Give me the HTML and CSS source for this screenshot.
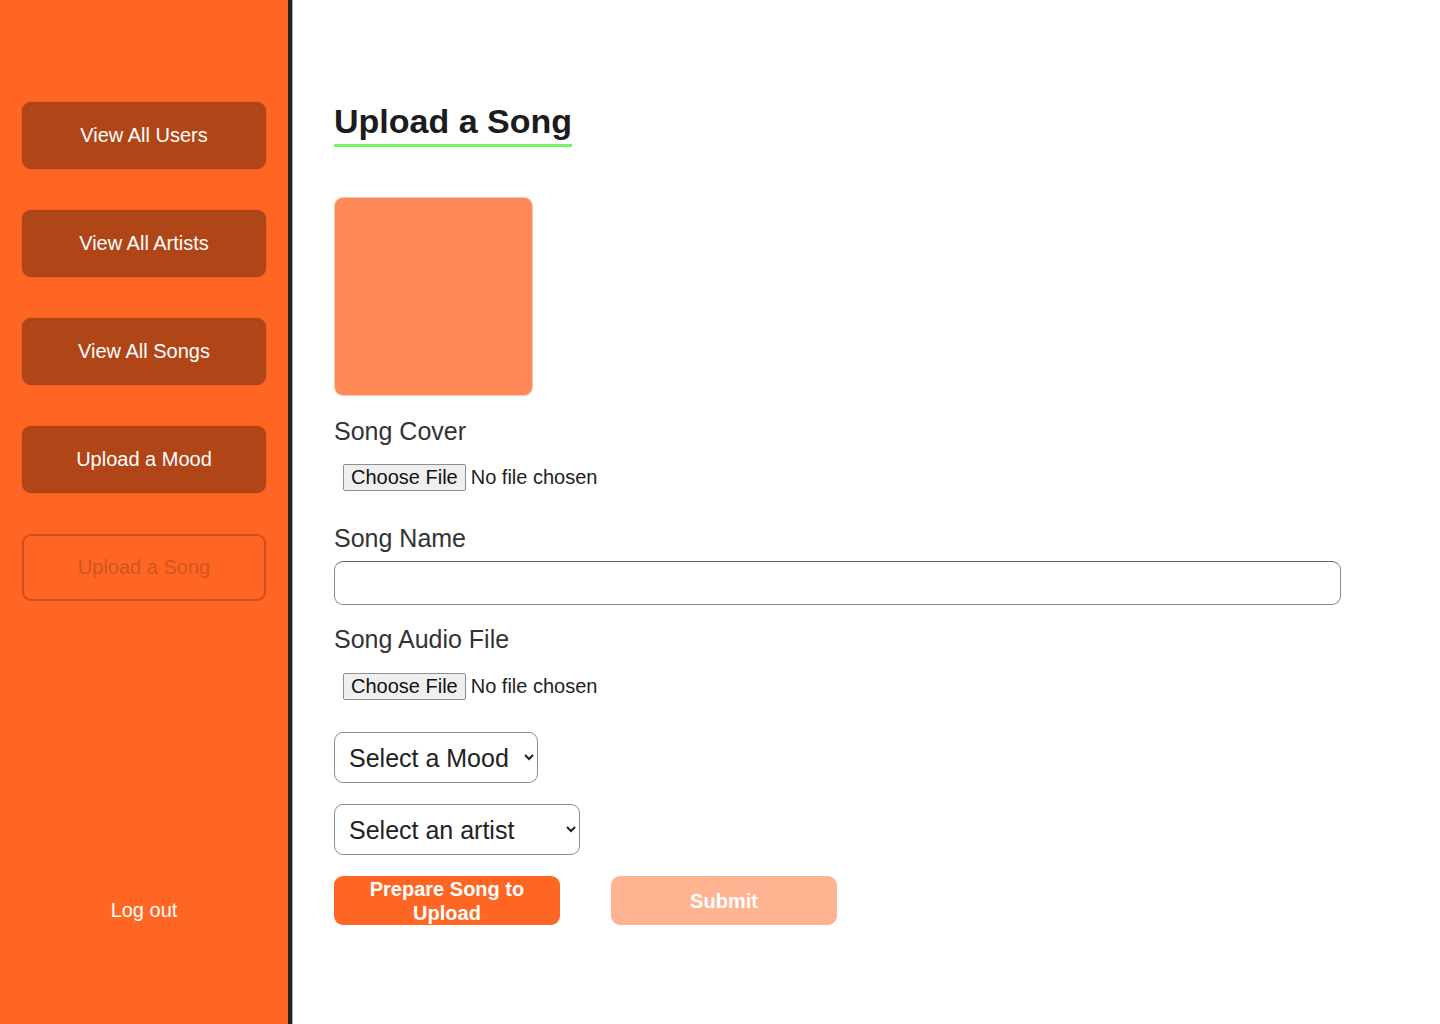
FILE: index.html
```html
<!DOCTYPE html>
<html lang="en">
<head>
<meta charset="utf-8">
<title>Upload a Song</title>
<link rel="stylesheet" href="styles.css">
</head>
<body>
<div class="layout">
  <aside class="sidebar">
    <nav class="nav">
      <button class="nav-btn">View All Users</button>
      <button class="nav-btn">View All Artists</button>
      <button class="nav-btn">View All Songs</button>
      <button class="nav-btn">Upload a Mood</button>
      <button class="nav-btn nav-btn-active">Upload a Song</button>
    </nav>
    <div class="logout">Log out</div>
  </aside>
  <main class="main">
    <h1 class="title">Upload a Song</h1>
    <form class="form">
      <div class="cover"></div>
      <label class="label label-cover">Song Cover</label>
      <input class="file file-cover" type="file">
      <label class="label label-name">Song Name</label>
      <input class="text" type="text">
      <label class="label label-audio">Song Audio File</label>
      <input class="file file-audio" type="file">
      <select class="select select-mood">
        <option>Select a Mood</option>
      </select>
      <select class="select select-artist">
        <option>Select an artist</option>
      </select>
      <div class="actions">
        <button type="button" class="btn btn-prepare">Prepare Song to<br>Upload</button>
        <button type="button" class="btn btn-submit">Submit</button>
      </div>
    </form>
  </main>
</div>
</body>
</html>
```
FILE: styles.css
```css
* { box-sizing: border-box; }
html, body { margin: 0; padding: 0; }
body {
  font-family: "Liberation Sans", Arial, sans-serif;
  background: #ffffff;
  color: #222;
}
.layout {
  display: flex;
  min-height: 1024px;
}
.sidebar {
  width: 292px;
  flex: 0 0 292px;
  height: 1024px;
  background: #ff6624;
  border-right: 4px solid #222222;
  box-shadow: 1px 0 0 #b8aaa4;
  display: flex;
  flex-direction: column;
  padding-top: 102px;
}
.nav {
  display: flex;
  flex-direction: column;
  gap: 41px;
  padding: 0 22px;
}
.nav-btn {
  height: 67px;
  width: 244px;
  border: 1px solid #ad4519;
  border-radius: 9px;
  background: #b04518;
  color: #ffffff;
  font-family: "Liberation Sans", Arial, sans-serif;
  font-size: 20px;
  box-shadow: 0 0 2px rgba(120, 40, 0, 0.35);
  cursor: pointer;
}
.nav-btn-active {
  background: transparent;
  border: 2px solid #c8521e;
  color: #cf5620;
  box-shadow: none;
}
.logout {
  margin-top: auto;
  margin-bottom: 102px;
  text-align: center;
  color: #ffffff;
  font-size: 20px;
  line-height: 24px;
}
.main {
  flex: 1;
  padding: 101px 0 0 42px;
}
.title {
  display: inline-block;
  margin: 0;
  font-size: 34px;
  line-height: 40px;
  font-weight: bold;
  color: #1c1c1c;
  padding-bottom: 3px;
  border-bottom: 3px solid #7af06a;
}
.form {
  display: flex;
  flex-direction: column;
  align-items: flex-start;
}
.cover {
  width: 199px;
  height: 199px;
  margin-top: 50px;
  background: #ff8a57;
  border: 1px solid #f9c6ad;
  border-radius: 9px;
}
.label {
  display: block;
  font-size: 25px;
  line-height: 28px;
  color: #333333;
}
.label-cover { margin-top: 21px; }
.label-name { margin-top: 33px; }
.label-audio { margin-top: 20px; }
.file {
  font-family: "Liberation Sans", Arial, sans-serif;
  font-size: 20px;
  color: #222;
  margin: 19px 0 0 9px;
  height: 27px;
}
.file-audio { margin-top: 20px; }
.file::file-selector-button {
  font-family: "Liberation Sans", Arial, sans-serif;
  font-size: 20px;
  height: 27px;
  padding: 0 7px;
  margin-right: 5px;
  background: #efefef;
  border: 1px solid #8f8f8f;
  border-radius: 2px;
  color: #111;
}
.text {
  margin-top: 9px;
  width: 1007px;
  height: 44px;
  border: 1px solid #8a8a8a;
  border-top-color: #666;
  border-radius: 9px;
  font-size: 20px;
  padding: 0 12px;
  background: #fff;
}
.select {
  height: 51px;
  border: 1px solid #8c8c8c;
  border-radius: 9px;
  background: #ffffff;
  font-family: "Liberation Sans", Arial, sans-serif;
  font-size: 25px;
  color: #222;
  padding: 0 6px 0 10px;
}
.select-mood { width: 204px; margin-top: 32px; }
.select-artist { width: 246px; margin-top: 21px; }
.actions {
  display: flex;
  gap: 51px;
  margin-top: 21px;
}
.btn {
  width: 226px;
  height: 49px;
  border: none;
  border-radius: 9px;
  font-family: "Liberation Sans", Arial, sans-serif;
  font-size: 20px;
  line-height: 24px;
  font-weight: bold;
  color: #ffffff;
  padding: 0;
  cursor: pointer;
}
.btn-prepare { background: #ff6624; }
.btn-submit { background: #ffb391; }
```
